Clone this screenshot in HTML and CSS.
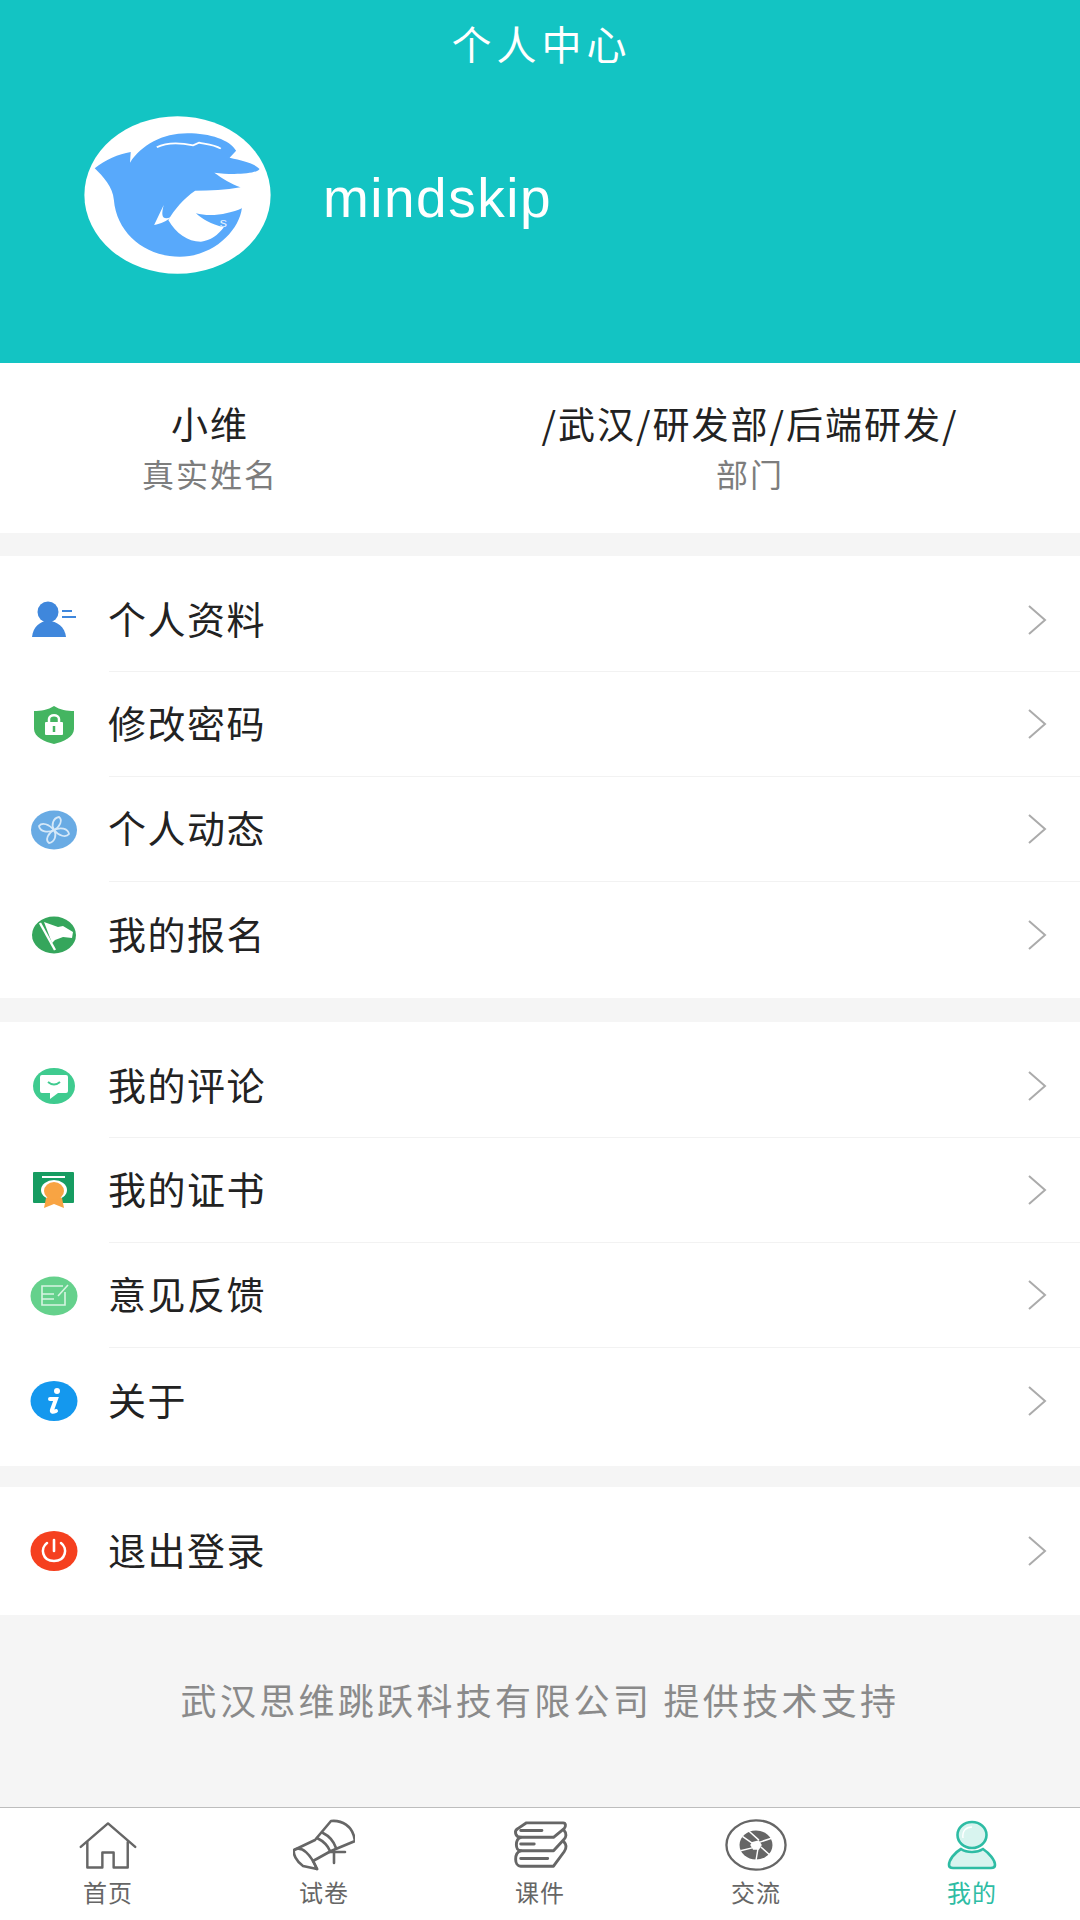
FILE: index.html
```html
<!DOCTYPE html>
<html lang="zh-CN">
<head>
<meta charset="utf-8">
<title>个人中心</title>
<link rel="stylesheet" href="styles.css">
</head>
<body>
<div class="page">
  <header class="hero">
    <h1 class="hero-title">个人中心</h1>
    <div class="profile">
      <svg class="avatar" viewBox="220 348 488 474" preserveAspectRatio="none">
        <ellipse cx="464" cy="585" rx="243" ry="236" fill="#fff"/>
        <path fill="#58a9fb" d="M248,505 C275,480 310,462 342,456 L340,488 C370,435 425,400 490,400 C550,400 600,420 617,452 L600,473 C635,482 665,490 678,507 C670,522 610,526 560,518 C580,535 605,552 628,562 L632,625 C625,690 560,770 470,770 C380,770 305,700 298,600 C295,560 270,530 248,505 Z"/>
        <path fill="#fff" d="M510,572 C480,595 455,630 440,660 C460,700 490,725 525,725 C550,722 570,705 585,682 C550,672 530,658 512,640 C550,652 600,642 632,625 L640,562 L628,562 C590,570 550,572 510,572 Z"/>
        <path fill="#fff" d="M428,615 L403,675 C420,672 438,662 446,652 C425,660 420,650 428,615 Z"/>
        <path fill="none" stroke="#fff" stroke-width="5" d="M410,442 C440,424 480,430 505,436 L520,428 C535,432 558,432 577,446"/>
        <text class="logo-s" x="574" y="682">s</text>
      </svg>
      <span class="username">mindskip</span>
    </div>
  </header>

  <section class="info">
    <div class="info-cell info-name">
      <div class="info-value">小维</div>
      <div class="info-label">真实姓名</div>
    </div>
    <div class="info-cell info-dept">
      <div class="info-value">/武汉/研发部/后端研发/</div>
      <div class="info-label">部门</div>
    </div>
  </section>

  <section class="group">
    <div class="row">
      <svg class="icon" viewBox="0 0 48 40"><circle cx="18" cy="12" r="10.5" fill="#3f87dc"/><path fill="#3f87dc" d="M2,37 C3,27 10,21 18,21 C27,21 35,27 36,37 Z"/><path stroke="#3f87dc" stroke-width="2" fill="none" d="M32,11 H42 M32,17 H46"/></svg>
      <div class="row-main"><span class="row-text">个人资料</span><svg class="chev" viewBox="0 0 20 30"><path d="M2,1 L18,15 L2,29"/></svg></div>
    </div>
    <div class="row">
      <svg class="icon" viewBox="0 0 48 40"><path fill="#44b561" d="M24,1 C30,5 37,6 44,6 V24 C44,32 33,37 24,39 C15,37 4,32 4,24 V6 C11,6 18,5 24,1 Z"/><rect x="15" y="17" width="18" height="13" rx="1" fill="#fff"/><path fill="none" stroke="#fff" stroke-width="2.5" d="M19,17 V14 C19,9 29,9 29,14 V17"/><path stroke="#44b561" stroke-width="2.5" d="M24,21 V27"/></svg>
      <div class="row-main"><span class="row-text">修改密码</span><svg class="chev" viewBox="0 0 20 30"><path d="M2,1 L18,15 L2,29"/></svg></div>
    </div>
    <div class="row">
      <svg class="icon" viewBox="0 0 48 40"><ellipse cx="24" cy="20" rx="23" ry="19.5" fill="#69abe4"/><g fill="none" stroke="#d5e8f8" stroke-width="1.8"><path d="M24,20 C19,14 12,12 9,16 C10,22 18,23 24,20 Z"/><path d="M24,20 C30,17 33,10 29,7 C23,8 21,15 24,20 Z"/><path d="M24,20 C29,26 36,28 39,24 C38,18 30,17 24,20 Z"/><path d="M24,20 C18,23 15,30 19,33 C25,32 27,25 24,20 Z"/></g></svg>
      <div class="row-main"><span class="row-text">个人动态</span><svg class="chev" viewBox="0 0 20 30"><path d="M2,1 L18,15 L2,29"/></svg></div>
    </div>
    <div class="row">
      <svg class="icon" viewBox="0 0 48 40"><ellipse cx="24" cy="20" rx="22" ry="18.5" fill="#35a65c"/><path fill="#fff" d="M14,7 L28,12 L33,11 L43,17 L42,23 L33,22 L25,25 L22,28 Z"/><path stroke="#fff" stroke-width="2.4" d="M10,8 L25,35"/></svg>
      <div class="row-main no-line"><span class="row-text">我的报名</span><svg class="chev" viewBox="0 0 20 30"><path d="M2,1 L18,15 L2,29"/></svg></div>
    </div>
  </section>

  <section class="group group-second">
    <div class="row">
      <svg class="icon" viewBox="0 0 48 40"><ellipse cx="24" cy="20" rx="21" ry="18" fill="#3fcb8f"/><path fill="#fff" d="M12,9 H36 Q38,9 38,11 V25 Q38,27 36,27 H28 L20,33 V27 H12 Q10,27 10,25 V11 Q10,9 12,9 Z"/><path fill="none" stroke="#3fcb8f" stroke-width="2" d="M18,16 Q24,21 30,16"/></svg>
      <div class="row-main"><span class="row-text">我的评论</span><svg class="chev" viewBox="0 0 20 30"><path d="M2,1 L18,15 L2,29"/></svg></div>
    </div>
    <div class="row">
      <svg class="icon" viewBox="0 0 48 40"><rect x="3" y="1" width="41" height="31" rx="1" fill="#169c61"/><path d="M12,6 H35" stroke="#fff" stroke-width="2"/><ellipse cx="24" cy="19" rx="13" ry="10" fill="#fff"/><path fill="#f8a443" d="M16,27 L14,37 L24,33 L34,37 L32,27 Z"/><ellipse cx="24" cy="20" rx="10" ry="9" fill="#f8a443"/></svg>
      <div class="row-main"><span class="row-text">我的证书</span><svg class="chev" viewBox="0 0 20 30"><path d="M2,1 L18,15 L2,29"/></svg></div>
    </div>
    <div class="row">
      <svg class="icon" viewBox="0 0 48 40"><ellipse cx="24" cy="20" rx="23.5" ry="19.5" fill="#65d18c"/><g fill="none" stroke="#d8f4e2" stroke-width="1.6"><path d="M33,10 H12 V29 H35 V16"/><path d="M12,18 H24 M12,23 H24"/><path d="M28,20 L38,9"/></g></svg>
      <div class="row-main"><span class="row-text">意见反馈</span><svg class="chev" viewBox="0 0 20 30"><path d="M2,1 L18,15 L2,29"/></svg></div>
    </div>
    <div class="row">
      <svg class="icon" viewBox="0 0 48 40"><ellipse cx="24" cy="20" rx="23.5" ry="20" fill="#1498ee"/><circle cx="27" cy="10" r="3" fill="#fff"/><path fill="none" stroke="#fff" stroke-width="4" stroke-linecap="round" d="M20,18 H26 L22,29 Q21,32 26,30"/></svg>
      <div class="row-main no-line"><span class="row-text">关于</span><svg class="chev" viewBox="0 0 20 30"><path d="M2,1 L18,15 L2,29"/></svg></div>
    </div>
  </section>

  <section class="group group-single">
    <div class="row">
      <svg class="icon" viewBox="0 0 48 40"><ellipse cx="24" cy="20" rx="23.5" ry="20" fill="#f5401f"/><path fill="none" stroke="#fff" stroke-width="2.6" stroke-linecap="round" d="M17,12 C10,17 12,30 24,30 C36,30 38,17 31,12"/><path stroke="#fff" stroke-width="2.6" stroke-linecap="round" d="M24,9 V20"/></svg>
      <div class="row-main no-line"><span class="row-text">退出登录</span><svg class="chev" viewBox="0 0 20 30"><path d="M2,1 L18,15 L2,29"/></svg></div>
    </div>
  </section>

  <footer class="support">武汉思维跳跃科技有限公司 提供技术支持</footer>

  <nav class="tabs">
    <div class="tab">
      <svg class="tab-icon" viewBox="-2 -3 66 56"><g class="ink"><path d="M2,27 L31,2 L60,27"/><path d="M9,22 V49 H25 V33 H37 V49 H52 V22"/></g></svg>
      <span>首页</span>
    </div>
    <div class="tab">
      <svg class="tab-icon" viewBox="0 0 62 52"><g class="ink"><path d="M38,2 C48,1 60,6 62,22 L38,32 L20,42 L24,50 L10,47 C3,42 0,35 1,31 L22,21 Z"/><path d="M1,31 C9,26 18,36 24,50"/><path d="M30,14 C36,17 41,23 43,29 M24,19 C30,22 35,27 37,32"/><path d="M36,33 H52 M41,32 V44"/></g></svg>
      <span>试卷</span>
    </div>
    <div class="tab">
      <svg class="tab-icon" viewBox="-3 -3 62 56"><g class="ink ink-thick"><path d="M14,2 H52 C55,2 55,6 53,8 L42,17 H8 C2,17 1,10 5,8 Z"/><path d="M53,10 C56,13 55,17 53,19 L42,31 H8 C2,31 2,19 8,17"/><path d="M53,22 C56,25 55,29 53,32 L42,47 H8 C1,47 1,33 8,31"/><path d="M8,10 H30 M8,24 H22 M8,39 H36"/></g></svg>
      <span>课件</span>
    </div>
    <div class="tab">
      <svg class="tab-icon" viewBox="0 0 64 54"><ellipse cx="32" cy="27" rx="30.500" ry="25.500" fill="none" stroke="#666" stroke-width="2.400"/><ellipse cx="32" cy="27" rx="17" ry="15" fill="#666"/><path stroke="#fff" stroke-width="1.500" d="M24,12 L35,22 M48,20 L36,24 M46,37 L37,29 M32,43 L34,31 M16,33 L28,30 M18,18 L28,25"/><polygon points="28,24 35,22 38,27 35,32 29,32 26,27" fill="#fff"/></svg>
      <span>交流</span>
    </div>
    <div class="tab tab-active">
      <svg class="tab-icon" viewBox="-3 -2 56 54"><g fill="#d8f4ef" stroke="#2ebca4" stroke-width="2.600"><ellipse cx="25" cy="15" rx="14.500" ry="13"/><path d="M14,29 C7,33 2,40 2,45 C2,48 4,48 6,48 H44 C47,48 48,47 48,45 C48,40 42,33 36,29 C30,33 20,33 14,29 Z"/></g><path d="M16,18 C15,11 19,7 25,7" fill="none" stroke="#fff" stroke-width="1.500"/></svg>
      <span>我的</span>
    </div>
  </nav>
</div>
</body>
</html>
```

FILE: styles.css
```css
* { box-sizing: border-box; }
html, body { margin: 0; padding: 0; }
body {
  width: 1080px;
  height: 1920px;
  background: #f5f5f5;
  font-family: "Noto Sans CJK SC", "Noto Sans", sans-serif;
  overflow: hidden;
}
.page { display: flex; flex-direction: column; height: 1920px; }

.hero { height: 363px; background: #13c4c3; color: #fff; flex: none; }
.hero-title {
  margin: 0;
  height: 90px;
  padding-left: 3px;
  line-height: 86px;
  font-size: 40px;
  font-weight: 400;
  letter-spacing: 5px;
  text-align: center;
}
.profile { display: flex; align-items: center; gap: 52px; margin-top: 26px; padding-left: 84px; }
.avatar { width: 187px; height: 158px; display: block; flex: none; }
.logo-s { font-family: "Liberation Sans", sans-serif; font-size: 38px; fill: #e4f2ff; }
.username {
  font-family: "Liberation Sans", sans-serif;
  font-size: 55px;
  letter-spacing: 1.500px;
  position: relative;
  top: 3px;
}

.info { display: grid; grid-template-columns: 418px 1fr; height: 170px; background: #fff; flex: none; }
.info-cell { text-align: center; padding-top: 36px; }
.info-value { font-size: 37px; line-height: 48px; color: #222; letter-spacing: 2px; padding-left: 2px; }
.info-label { font-size: 32px; line-height: 52px; color: #7d7d7d; letter-spacing: 2px; padding-left: 2px; }

.group { margin-top: 23px; padding: 12px 0 11px; background: #fff; flex: none; }
.group + .group { margin-top: 24px; }
.group-second { padding-bottom: 13px; }
.group + .group-single { margin-top: 21px; padding: 12px 0; }
.row { display: flex; align-items: stretch; height: 105px; padding-left: 30px; }
.group .row:first-child { height: 104px; }
.icon { width: 48px; height: 40px; flex: none; align-self: center; margin-right: 31px; display: block; }
.row-main {
  flex: 1;
  display: flex;
  align-items: center;
  justify-content: space-between;
  border-bottom: 1px solid #f2f2f2;
  padding-right: 33px;
}
.row-main.no-line { border-bottom: 0; }
.row-text { font-size: 38px; letter-spacing: 1.500px; color: #222; margin-bottom: 5px; margin-left: -1px; }
.chev { width: 20px; height: 30px; display: block; flex: none; }
.chev path { fill: none; stroke: #ababab; stroke-width: 2; }

.support {
  flex: 1;
  display: flex;
  align-items: center;
  justify-content: center;
  padding-bottom: 24px;
  font-size: 36px;
  letter-spacing: 3.300px;
  color: #8a8a8a;
}

.tabs {
  display: grid;
  grid-template-columns: repeat(5, 1fr);
  height: 113px;
  flex: none;
  background: #fff;
  border-top: 1px solid #bdbdbd;
}
.tab {
  display: flex;
  flex-direction: column;
  align-items: center;
  padding-top: 10px;
  font-size: 24px;
  line-height: 34px;
  letter-spacing: 1px;
  color: #666;
}
.tab-icon { width: 62px; height: 54px; display: block; margin-bottom: 3px; }
.ink { fill: none; stroke: #666; stroke-width: 2.600; stroke-linejoin: round; stroke-linecap: round; }
.ink-thick { stroke-width: 3; }
.tab-active { color: #2ebca4; }
```
